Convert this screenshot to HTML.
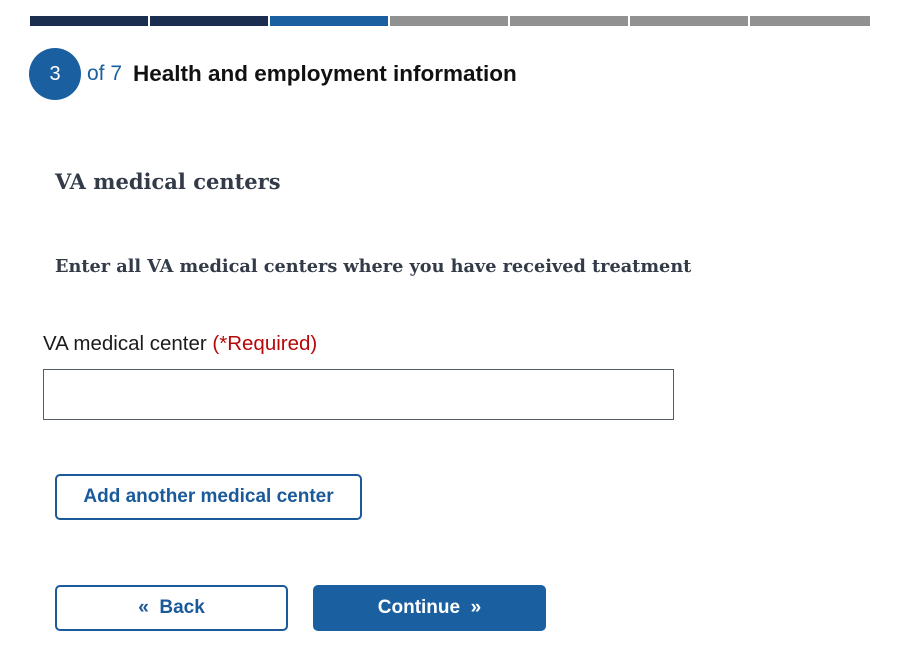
<!DOCTYPE html>
<html><head><style>
body{margin:0;width:900px;height:666px;background:#fff;font-family:"Liberation Sans",sans-serif;position:relative;overflow:hidden}
.seg{position:absolute;top:16px;height:10px;width:118px}
.a{position:absolute;white-space:nowrap}
.btn{position:absolute;box-sizing:border-box;border:2px solid #1a5a9a;border-radius:5px;color:#1a5a9a;font-weight:bold;font-size:19px;display:flex;align-items:center;justify-content:center}
</style></head><body>
<div class="seg" style="left:30px;background:#1c2e4f"></div>
<div class="seg" style="left:150px;background:#1c2e4f"></div>
<div class="seg" style="left:270px;background:#1a5fa0"></div>
<div class="seg" style="left:390px;background:#919191"></div>
<div class="seg" style="left:510px;background:#919191"></div>
<div class="seg" style="left:630px;background:#919191"></div>
<div class="seg" style="left:750px;background:#919191;width:120px"></div>
<div class="a" style="left:29px;top:48px;width:52px;height:52px;border-radius:50%;background:#1a5fa0;color:#fff;font-size:20px;line-height:52px;text-align:center">3</div>
<div class="a" style="left:87px;top:61px;font-size:21px;line-height:26px;color:#1a5fa0">of 7</div>
<div class="a" style="left:133px;top:60px;font-size:22.5px;line-height:27px;font-weight:bold;color:#111">Health and employment information</div>
<div class="a" style="left:55px;top:169px;font-family:'DejaVu Serif',serif;font-weight:bold;font-size:21px;color:#333b48">VA medical centers</div>
<div class="a" style="left:55px;top:256px;font-family:'DejaVu Serif',serif;font-weight:bold;font-size:17.7px;color:#333b48">Enter all VA medical centers where you have received treatment</div>
<div class="a" style="left:43px;top:332px;font-size:20.5px;color:#1b1b1b">VA medical center <span style="color:#b50909">(*Required)</span></div>
<div class="a" style="left:43px;top:369px;width:631px;height:51px;box-sizing:border-box;border:1px solid #565c65"></div>
<div class="btn" style="left:55px;top:474px;width:307px;height:46px">Add another medical center</div>
<div class="btn" style="left:55px;top:585px;width:233px;height:46px">«&nbsp; Back</div>
<div class="btn" style="left:313px;top:585px;width:233px;height:46px;background:#1a5fa0;border-color:#1a5fa0;color:#fff">Continue &nbsp;»</div>
</body></html>
